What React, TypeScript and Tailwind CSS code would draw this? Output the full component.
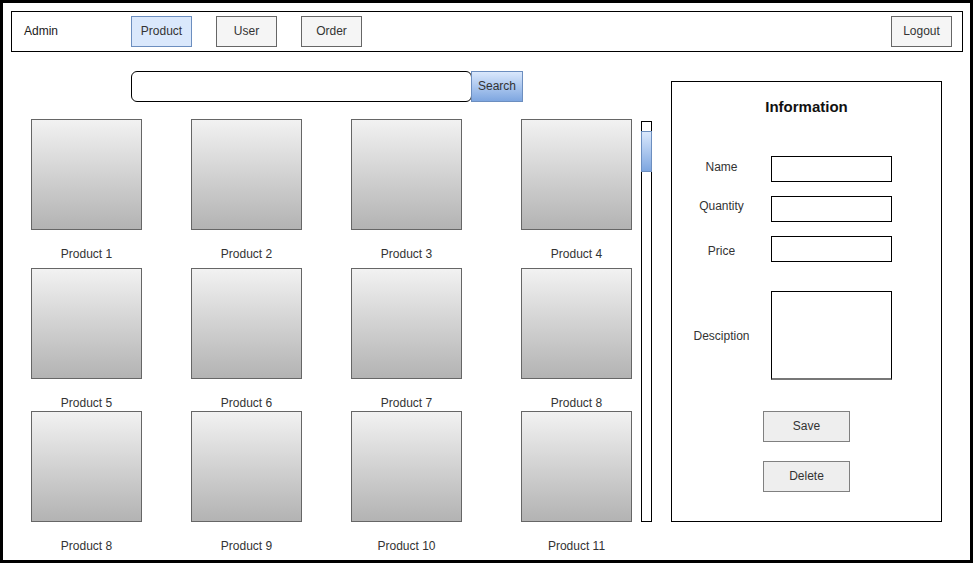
import React from 'react';

const colGap = ['ml-0', 'ml-[49px]', 'ml-[49px]', 'ml-[59px]'];

const rows = [
  { top: 'mt-0', labelTop: 'mt-[17px]', items: ['Product 1', 'Product 2', 'Product 3', 'Product 4'] },
  { top: 'mt-[7px]', labelTop: 'mt-[17px]', items: ['Product 5', 'Product 6', 'Product 7', 'Product 8'] },
  { top: 'mt-[1px]', labelTop: 'mt-[17px]', items: ['Product 8', 'Product 9', 'Product 10', 'Product 11'] },
];

function NavButton({ label, active }: { label: string; active?: boolean }) {
  return (
    <button
      className={`w-[61px] h-[31px] pb-[2px] border text-[12px] leading-[14px] text-[#333] ${active ? 'bg-[#dae8fc] border-[#6c8ebf]' : 'bg-[#f5f5f5] border-[#666]'}`}
    >
      {label}
    </button>
  );
}

function ProductCell({ name, labelTop }: { name: string; labelTop: string }) {
  return (
    <div className="flex flex-col items-center w-[111px]">
      <div className="w-[111px] h-[111px] border border-[#666] bg-gradient-to-b from-[#f2f2f2] to-[#b3b3b3]" />
      <div className={`${labelTop} h-[14px] leading-[14px] text-[12px] text-[#333] whitespace-nowrap`}>{name}</div>
    </div>
  );
}

function FieldRow({ label, labelTop, top, tall }: { label: string; labelTop: string; top: string; tall?: boolean }) {
  return (
    <div className={`flex items-start ${top}`}>
      <div className={`w-[99px] text-center text-[12px] leading-[14px] text-[#333] ${labelTop}`}>{label}</div>
      <div className={`w-[121px] border border-black bg-white ${tall ? 'h-[89px] border-b-2 border-b-[#777]' : 'h-[26px]'}`} />
    </div>
  );
}

export default function App() {
  return (
    <div className="w-[973px] h-[563px] border-[3px] border-black bg-white pl-[8px] pt-[8px] overflow-hidden font-['Liberation_Sans',Arial,sans-serif]">
      {/* top bar */}
      <div className="w-[952px] h-[41px] border border-black flex items-center">
        <span className="w-[119px] pl-[12px] pb-[2px] text-[12px] leading-[14px] text-[#1a1a1a]">Admin</span>
        <div className="flex items-center gap-[24px]">
          <NavButton label="Product" active />
          <NavButton label="User" />
          <NavButton label="Order" />
        </div>
        <div className="ml-auto pr-[10px]">
          <NavButton label="Logout" />
        </div>
      </div>

      <div className="flex items-start">
        {/* products side */}
        <div className="flex flex-col">
          <div className="flex mt-[19px] ml-[120px]">
            <div className="w-[341px] h-[31px] border border-black rounded-[6px] bg-white" />
            <button className="-ml-px w-[52px] h-[31px] pb-[2px] border border-[#6c8ebf] bg-gradient-to-b from-[#dae8fc] to-[#7ea6e0] text-[12px] leading-[14px] text-[#333]">
              Search
            </button>
          </div>

          <div className="flex items-start mt-[17px]">
            <div className="flex flex-col ml-[20px]">
              {rows.map((row, r) => (
                <div key={r} className={`flex ${row.top}`}>
                  {row.items.map((name, c) => (
                    <div key={c} className={colGap[c]}>
                      <ProductCell name={name} labelTop={row.labelTop} />
                    </div>
                  ))}
                </div>
              ))}
            </div>
            <div className="relative ml-[9px] mt-[2px] w-[11px] h-[401px] border border-black bg-white">
              <div className="absolute -left-px -right-px top-[9px] h-[41px] border border-[#6c8ebf] bg-gradient-to-b from-[#dae8fc] to-[#7ea6e0]" />
            </div>
          </div>
        </div>

        {/* information panel */}
        <div className="mt-[29px] ml-[19px] w-[271px] h-[441px] border border-black flex flex-col">
          <div className="mt-[16px] text-center text-[15px] leading-[18px] font-bold text-[#111]">Information</div>
          <FieldRow label="Name" top="mt-[40px]" labelTop="mt-[4px]" />
          <FieldRow label="Quantity" top="mt-[14px]" labelTop="mt-[3px]" />
          <FieldRow label="Price" top="mt-[14px]" labelTop="mt-[8px]" />
          <FieldRow label="Desciption" top="mt-[29px]" labelTop="mt-[38px]" tall />
          <button className="mt-[31px] mx-auto w-[87px] h-[31px] pb-[2px] border border-[#808080] bg-[#eeeeee] text-[12px] leading-[14px] text-[#333]">
            Save
          </button>
          <button className="mt-[19px] mx-auto w-[87px] h-[31px] pb-[2px] border border-[#808080] bg-[#eeeeee] text-[12px] leading-[14px] text-[#333]">
            Delete
          </button>
        </div>
      </div>
    </div>
  );
}
